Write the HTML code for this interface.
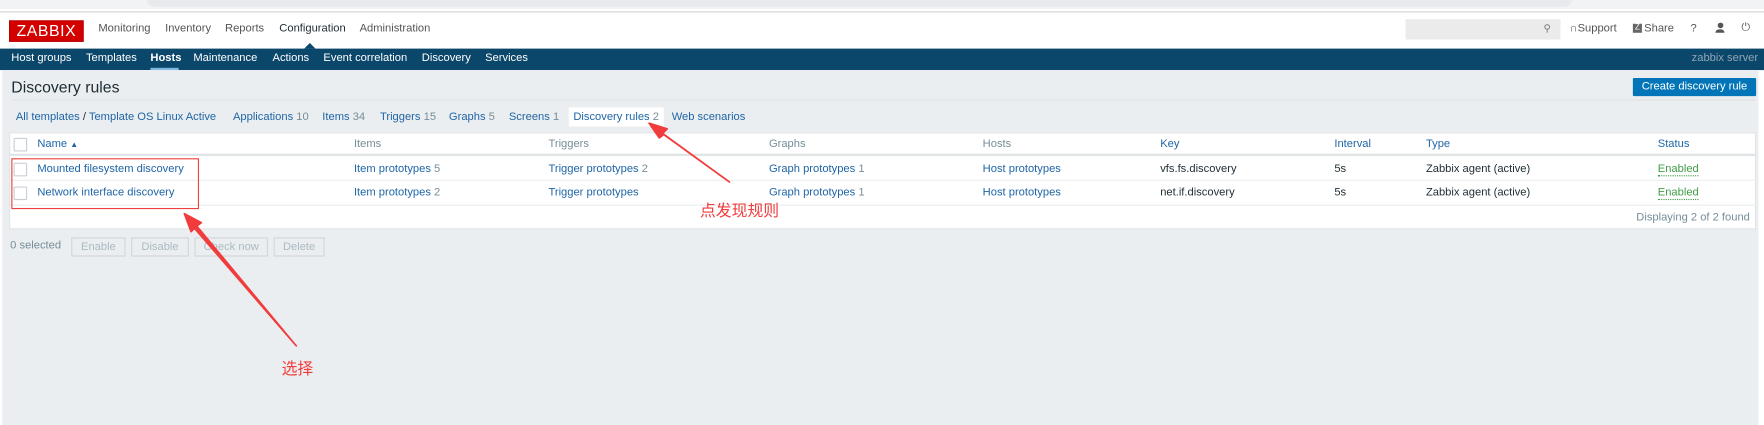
<!DOCTYPE html>
<html><head><meta charset="utf-8"><style>
html,body{margin:0;padding:0;width:1764px;height:425px;overflow:hidden;background:#fff}
#w{position:absolute;left:0;top:0;width:1560px;height:376px;transform:scale(1.1308,1.1303);transform-origin:0 0;font-family:"Liberation Sans","Noto Sans CJK SC",sans-serif;font-size:9.9px;color:#1f2c33}
.a{position:absolute;white-space:nowrap}
a,.l{color:#1f65a6;text-decoration:none}
.g{color:#768d99}
.cb{position:absolute;width:10px;height:10px;border:1px solid #c8d0d6;background:#fff;border-radius:1px}
.btn{position:absolute;top:210px;height:15px;border:1px solid #d0d6da;color:#acbbc2;font-size:9.9px;line-height:15px;text-align:center;background:#ebeef0}
</style></head><body><div id="w">
<div class="a" style="left:0;top:0;width:1560px;height:8px;background:#f1f3f4"></div>
<div class="a" style="left:130px;top:0;width:1260px;height:6px;background:#e8eaed;border-radius:0 0 8px 8px"></div>
<div class="a" style="left:0;top:10px;width:1560px;height:1px;background:#d5d5d5"></div>
<div class="a" style="left:8px;top:18px;width:64px;height:17px;background:#d40000;border:1px solid #b00;color:#fff;font-size:14px;line-height:17px;text-align:center;letter-spacing:0.5px">ZABBIX</div>
<div class="a" style="left:87px;top:20px;color:#555">Monitoring</div>
<div class="a" style="left:146px;top:20px;color:#555">Inventory</div>
<div class="a" style="left:199px;top:20px;color:#555">Reports</div>
<div class="a" style="left:247px;top:20px;color:#1f2c33">Configuration</div>
<div class="a" style="left:318px;top:20px;color:#555">Administration</div>
<div class="a" style="left:269px;top:38px;width:0;height:0;border-left:5px solid transparent;border-right:5px solid transparent;border-bottom:5px solid #0b466b"></div>
<div class="a" style="left:1243px;top:17px;width:137px;height:18px;background:#ebebeb"></div>
<div class="a" style="left:1365px;top:20px;color:#777;font-size:9px">&#9906;</div>
<div class="a" style="left:1388px;top:20px;color:#555">&#8745;Support</div>
<div class="a" style="left:1444px;top:21px;width:8px;height:8px;background:#666;color:#fff;font-size:7px;line-height:8px;text-align:center">Z</div>
<div class="a" style="left:1454px;top:20px;color:#555">Share</div>
<div class="a" style="left:1495px;top:20px;color:#555">?</div>
<div class="a" style="left:1517px;top:20px;width:8px;height:9px;"><div style="width:5px;height:5px;border-radius:50%;background:#555;margin:0 auto"></div><div style="width:8px;height:3px;background:#555;border-radius:3px 3px 0 0;margin-top:1px"></div></div>
<div class="a" style="left:1540px;top:19px;color:#555">&#9211;</div>
<div class="a" style="left:0;top:43px;width:1560px;height:19px;background:#0b466b"></div>
<div class="a" style="left:10px;top:46px;color:#fff">Host groups</div>
<div class="a" style="left:76px;top:46px;color:#fff">Templates</div>
<div class="a" style="left:133px;top:46px;color:#fff;font-weight:bold">Hosts</div>
<div class="a" style="left:133px;top:60px;width:25px;height:2px;background:#7fb8e0"></div>
<div class="a" style="left:171px;top:46px;color:#fff">Maintenance</div>
<div class="a" style="left:241px;top:46px;color:#fff">Actions</div>
<div class="a" style="left:286px;top:46px;color:#fff">Event correlation</div>
<div class="a" style="left:373px;top:46px;color:#fff">Discovery</div>
<div class="a" style="left:429px;top:46px;color:#fff">Services</div>
<div class="a" style="left:1496px;top:46px;color:#8fa6b5">zabbix server</div>
<div class="a" style="left:2px;top:62px;width:1553px;height:314px;background:#ebeef0"></div>
<div class="a" style="left:10px;top:69px;font-size:14px;color:#1f2c33">Discovery rules</div>
<div class="a" style="left:1444px;top:69px;width:109px;height:16px;background:#0275b8;color:#fff;line-height:16px;text-align:center;border-radius:1px">Create discovery rule</div>
<div class="a" style="left:10px;top:88px;width:1543px;height:1px;background:#dde2e5"></div>
<div class="a" style="left:14px;top:98px"><a>All templates</a> <span>/</span> <a>Template OS Linux Active</a></div>
<div class="a" style="left:206px;top:98px"><a>Applications</a> <span class="g">10</span></div>
<div class="a" style="left:285px;top:98px"><a>Items</a> <span class="g">34</span></div>
<div class="a" style="left:336px;top:98px"><a>Triggers</a> <span class="g">15</span></div>
<div class="a" style="left:397px;top:98px"><a>Graphs</a> <span class="g">5</span></div>
<div class="a" style="left:450px;top:98px"><a>Screens</a> <span class="g">1</span></div>
<div class="a" style="left:503px;top:95px;width:84px;height:17px;background:#fff"></div>
<div class="a" style="left:507px;top:98px"><a>Discovery rules</a> <span class="g">2</span></div>
<div class="a" style="left:594px;top:98px"><a>Web scenarios</a></div>
<div class="a" style="left:8px;top:117px;width:1545px;height:86px;background:#fff;border:1px solid #dfe4e7;box-sizing:border-box"></div>
<div class="a" style="left:8px;top:136px;width:1545px;height:2px;background:#dfe4e7"></div>
<div class="a" style="left:8px;top:159px;width:1545px;height:1px;background:#ebeef0"></div>
<div class="a" style="left:8px;top:181px;width:1545px;height:1px;background:#ebeef0"></div>
<div class="cb" style="left:12px;top:122px"></div>
<div class="cb" style="left:12px;top:144px"></div>
<div class="cb" style="left:12px;top:165px"></div>
<div class="a l" style="left:33px;top:122px">Name <span style="font-size:7px">&#9650;</span></div>
<div class="a" style="left:313px;top:122px;color:#768d99">Items</div>
<div class="a" style="left:485px;top:122px;color:#768d99">Triggers</div>
<div class="a" style="left:680px;top:122px;color:#768d99">Graphs</div>
<div class="a" style="left:869px;top:122px;color:#768d99">Hosts</div>
<div class="a l" style="left:1026px;top:122px">Key</div>
<div class="a l" style="left:1180px;top:122px">Interval</div>
<div class="a l" style="left:1261px;top:122px">Type</div>
<div class="a l" style="left:1466px;top:122px">Status</div>
<div class="a l" style="left:33px;top:144px">Mounted filesystem discovery</div>
<div class="a" style="left:313px;top:144px"><a>Item prototypes</a> <span class="g">5</span></div>
<div class="a" style="left:485px;top:144px"><a>Trigger prototypes</a> <span class="g">2</span></div>
<div class="a" style="left:680px;top:144px"><a>Graph prototypes</a> <span class="g">1</span></div>
<div class="a l" style="left:869px;top:144px">Host prototypes</div>
<div class="a" style="left:1026px;top:144px">vfs.fs.discovery</div>
<div class="a" style="left:1180px;top:144px">5s</div>
<div class="a" style="left:1261px;top:144px">Zabbix agent (active)</div>
<div class="a" style="left:1466px;top:144px;color:#429e47;border-bottom:1px dotted #429e47">Enabled</div>
<div class="a l" style="left:33px;top:165px">Network interface discovery</div>
<div class="a" style="left:313px;top:165px"><a>Item prototypes</a> <span class="g">2</span></div>
<div class="a l" style="left:485px;top:165px">Trigger prototypes</div>
<div class="a" style="left:680px;top:165px"><a>Graph prototypes</a> <span class="g">1</span></div>
<div class="a l" style="left:869px;top:165px">Host prototypes</div>
<div class="a" style="left:1026px;top:165px">net.if.discovery</div>
<div class="a" style="left:1180px;top:165px">5s</div>
<div class="a" style="left:1261px;top:165px">Zabbix agent (active)</div>
<div class="a" style="left:1466px;top:165px;color:#429e47;border-bottom:1px dotted #429e47">Enabled</div>
<div class="a" style="left:1447px;top:187px;color:#768d99">Displaying 2 of 2 found</div>
<div class="a" style="left:9px;top:212px;color:#768d99">0 selected</div>
<div class="btn" style="left:63px;width:46px">Enable</div>
<div class="btn" style="left:116px;width:49px">Disable</div>
<div class="btn" style="left:172px;width:63px">Check now</div>
<div class="btn" style="left:242px;width:43px">Delete</div>
<div class="a" style="left:10px;top:140px;width:164px;height:43px;border:1px solid #f04040"></div>
<svg class="a" style="left:0;top:0" width="1560" height="376">
<path d="M645 161 L586 118 L590 114 L574 109 L583 122 L587 119 Z" fill="#f03c3c" stroke="#f03c3c" stroke-width="1.5" stroke-linejoin="round"/>
<path d="M262 306 L174 200 L178 197 L163 189 L169 205 L172 202 Z" fill="#f03c3c" stroke="#f03c3c" stroke-width="1.5" stroke-linejoin="round"/>
</svg>
<div class="a" style="left:619px;top:176px;color:#f03c3c;font-size:14px">点发现规则</div>
<div class="a" style="left:249px;top:316px;color:#f03c3c;font-size:14px">选择</div>
</div></body></html>
